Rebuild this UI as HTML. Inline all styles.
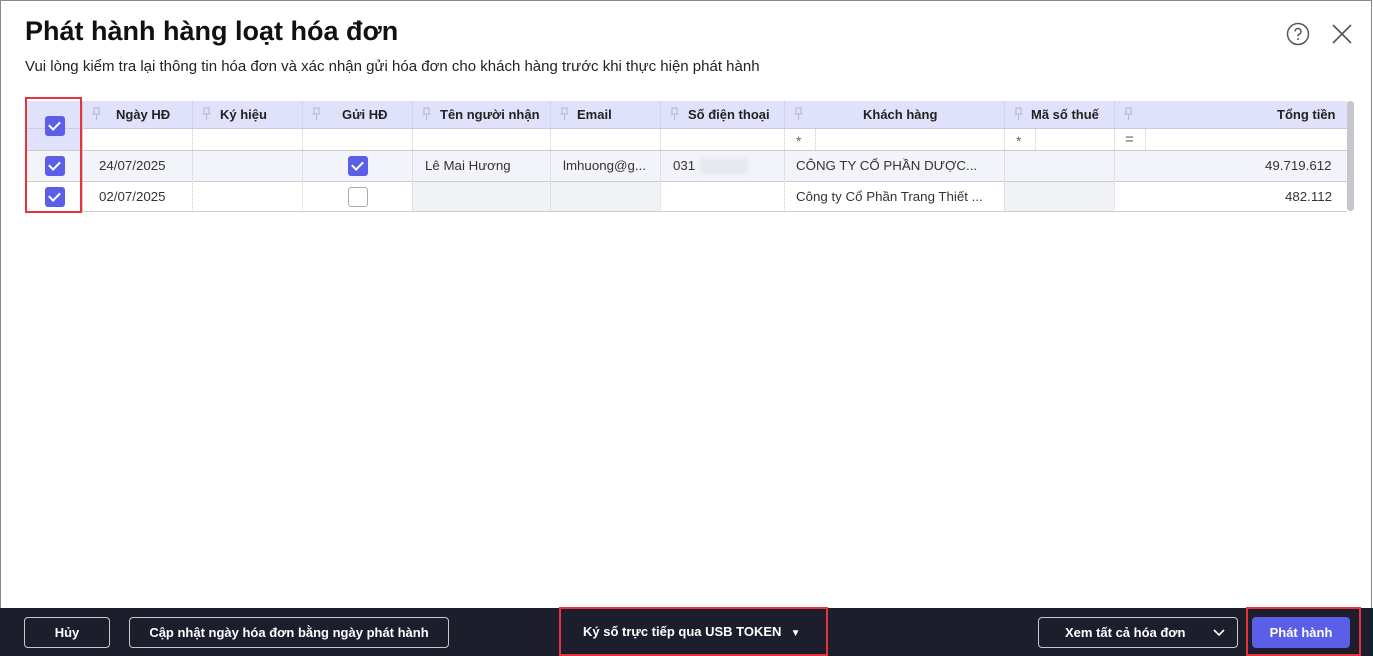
<!DOCTYPE html>
<html><head><meta charset="utf-8"><style>
*{box-sizing:border-box;margin:0;padding:0}
body{width:1373px;height:656px;position:relative;overflow:hidden;background:#fff;font-family:"Liberation Sans",sans-serif;color:#222}
.frame{position:absolute;left:0;top:0;width:1372px;height:656px;border:1px solid #888;border-bottom:none}
.a{position:absolute}
h1{position:absolute;left:25px;top:16px;font-size:27px;font-weight:bold;color:#111}
.sub{left:25px;top:58px;font-size:15px;color:#222}
.cb{position:absolute;width:20px;height:20px;border-radius:3px;background:#5b5ee6}
.cb:after{content:"";position:absolute;left:6px;top:3px;width:5px;height:9px;border:solid #fff;border-width:0 2px 2px 0;transform:rotate(45deg)}
.cbe{position:absolute;width:20px;height:20px;border-radius:3px;border:1px solid #aaa;background:#fff}
.red{position:absolute;border:2px solid #e5343d}
.btn{position:absolute;top:617px;height:31px;border:1px solid #c8c8c8;border-radius:4px;color:#fff;font-weight:bold;font-size:13px;text-align:center;line-height:29px}
</style></head><body>
<div class="frame"></div>
<h1>Phát hành hàng loạt hóa đơn</h1>
<div class="a sub">Vui lòng kiểm tra lại thông tin hóa đơn và xác nhận gửi hóa đơn cho khách hàng trước khi thực hiện phát hành</div>
<svg class="a" style="left:1286px;top:22px" width="24" height="24"><circle cx="12" cy="12" r="10.5" fill="none" stroke="#555" stroke-width="1.5"/><path d="M9 9.5a3 3 0 1 1 4 2.8c-.8.4-1 1-1 1.9" fill="none" stroke="#555" stroke-width="1.5"/><circle cx="12" cy="17" r="1" fill="#555"/></svg>
<svg class="a" style="left:1332px;top:24px" width="20" height="20"><path d="M1 1L19 19M19 1L1 19" stroke="#555" stroke-width="1.6"/></svg>

<div class="a" style="left:27px;top:101px;width:1320px;height:28px;background:#e0e1fa"></div>
<div class="a" style="left:27px;top:129px;width:56px;height:21px;background:#e0e1fa"></div>
<div class="a" style="left:27px;top:128px;width:1320px;height:1px;background:#c9cbe6"></div>
<div class="a" style="left:27px;top:150px;width:1320px;height:1px;background:#ccc"></div>
<div class="a" style="left:27px;top:151px;width:1320px;height:30px;background:#f3f4fa"></div>
<div class="a" style="left:27px;top:181px;width:1320px;height:1px;background:#ccc"></div>
<div class="a" style="left:412px;top:182px;width:248px;height:29px;background:#f1f2f6"></div>
<div class="a" style="left:1004px;top:182px;width:110px;height:29px;background:#f1f2f6"></div>
<div class="a" style="left:27px;top:211px;width:1320px;height:1px;background:#ccc"></div>
<div class="a" style="left:1347px;top:101px;width:7px;height:110px;background:#c6c7cc;border-radius:3px"></div>

<div class="a" style="left:82px;top:101px;width:1px;height:111px;background:#ccc"></div>
<div class="a" style="left:192px;top:101px;width:1px;height:111px;border-left:1px dotted #ccc"></div>
<div class="a" style="left:302px;top:101px;width:1px;height:111px;border-left:1px dotted #ccc"></div>
<div class="a" style="left:412px;top:101px;width:1px;height:111px;border-left:1px dotted #ccc"></div>
<div class="a" style="left:550px;top:101px;width:1px;height:111px;border-left:1px dotted #ccc"></div>
<div class="a" style="left:660px;top:101px;width:1px;height:111px;border-left:1px dotted #ccc"></div>
<div class="a" style="left:784px;top:101px;width:1px;height:111px;border-left:1px dotted #ccc"></div>
<div class="a" style="left:1004px;top:101px;width:1px;height:111px;border-left:1px dotted #ccc"></div>
<div class="a" style="left:1114px;top:101px;width:1px;height:111px;border-left:1px dotted #ccc"></div>
<div class="a" style="left:815px;top:129px;width:1px;height:21px;border-left:1px dotted #ccc"></div>
<div class="a" style="left:1035px;top:129px;width:1px;height:21px;border-left:1px dotted #ccc"></div>
<div class="a" style="left:1145px;top:129px;width:1px;height:21px;border-left:1px dotted #ccc"></div>

<svg class="a" style="left:0;top:107px" width="1373" height="14">
<g fill="none" stroke="#b8b8c8" stroke-width="1">
<path d="M94 1h5v6h-5zM92.5 7h8M96.5 7v6"/><path d="M204 1h5v6h-5zM202.5 7h8M206.5 7v6"/><path d="M314 1h5v6h-5zM312.5 7h8M316.5 7v6"/><path d="M424 1h5v6h-5zM422.5 7h8M426.5 7v6"/><path d="M562 1h5v6h-5zM560.5 7h8M564.5 7v6"/><path d="M672 1h5v6h-5zM670.5 7h8M674.5 7v6"/><path d="M796 1h5v6h-5zM794.5 7h8M798.5 7v6"/><path d="M1016 1h5v6h-5zM1014.5 7h8M1018.5 7v6"/><path d="M1126 1h5v6h-5zM1124.5 7h8M1128.5 7v6"/>
</g></svg>
<div class="a" style="top:107px;left:0;font-size:13px;font-weight:bold;color:#222">
<span class="a" style="left:116px;white-space:nowrap">Ngày HĐ</span>
<span class="a" style="left:220px;white-space:nowrap">Ký hiệu</span>
<span class="a" style="left:342px;white-space:nowrap">Gửi HĐ</span>
<span class="a" style="left:440px;white-space:nowrap">Tên người nhận</span>
<span class="a" style="left:577px;white-space:nowrap">Email</span>
<span class="a" style="left:688px;white-space:nowrap">Số điện thoại</span>
<span class="a" style="left:863px;white-space:nowrap">Khách hàng</span>
<span class="a" style="left:1031px;white-space:nowrap">Mã số thuế</span>
<span class="a" style="left:1277px;white-space:nowrap">Tổng tiền</span>
</div>
<div class="a" style="left:796px;top:133px;font-size:14px;color:#666">*</div>
<div class="a" style="left:1016px;top:133px;font-size:14px;color:#666">*</div>
<div class="a" style="left:1125px;top:131px;font-size:15px;color:#666">=</div>

<div class="cb" style="left:45px;top:116px"></div>
<div class="cb" style="left:45px;top:156px"></div>
<div class="cb" style="left:45px;top:187px"></div>
<div class="cb" style="left:348px;top:156px"></div>
<div class="cbe" style="left:348px;top:187px"></div>

<div class="a" style="top:158px;left:0;font-size:13.3px;color:#333;white-space:nowrap">
<span class="a" style="left:99px">24/07/2025</span>
<span class="a" style="left:425px">Lê Mai Hương</span>
<span class="a" style="left:563px">lmhuong@g...</span>
<span class="a" style="left:673px">031</span>
<span class="a" style="left:700px;top:0;width:48px;height:17px;background:#e7e8ee;filter:blur(2px)"></span>
<span class="a" style="left:796px">CÔNG TY CỔ PHẦN DƯỢC...</span>
<span class="a" style="left:1265px">49.719.612</span>
</div>
<div class="a" style="top:189px;left:0;font-size:13.3px;color:#333;white-space:nowrap">
<span class="a" style="left:99px">02/07/2025</span>
<span class="a" style="left:796px">Công ty Cổ Phần Trang Thiết ...</span>
<span class="a" style="left:1285px">482.112</span>
</div>

<div class="red" style="left:25px;top:97px;width:57px;height:116px"></div>

<div class="a" style="left:0;top:608px;width:1373px;height:48px;background:#1d1e2b"></div>
<div class="btn" style="left:24px;width:86px">Hủy</div>
<div class="btn" style="left:129px;width:320px">Cập nhật ngày hóa đơn bằng ngày phát hành</div>
<div class="a" style="left:583px;top:624px;color:#fff;font-weight:bold;font-size:13px;white-space:nowrap">Ký số trực tiếp qua USB TOKEN <span style="font-size:10px">&nbsp;&nbsp;▼</span></div>
<div class="red" style="left:559px;top:607px;width:269px;height:49px"></div>
<div class="btn" style="left:1038px;width:200px;text-align:left;padding-left:26px">Xem tất cả hóa đơn
<svg class="a" style="left:174px;top:11px" width="12" height="8"><path d="M1 1l5 5 5-5" fill="none" stroke="#fff" stroke-width="1.6"/></svg></div>
<div class="btn" style="left:1252px;width:98px;background:#5b5ee6;border-color:#5b5ee6">Phát hành</div>
<div class="red" style="left:1246px;top:607px;width:115px;height:49px"></div>
</body></html>
